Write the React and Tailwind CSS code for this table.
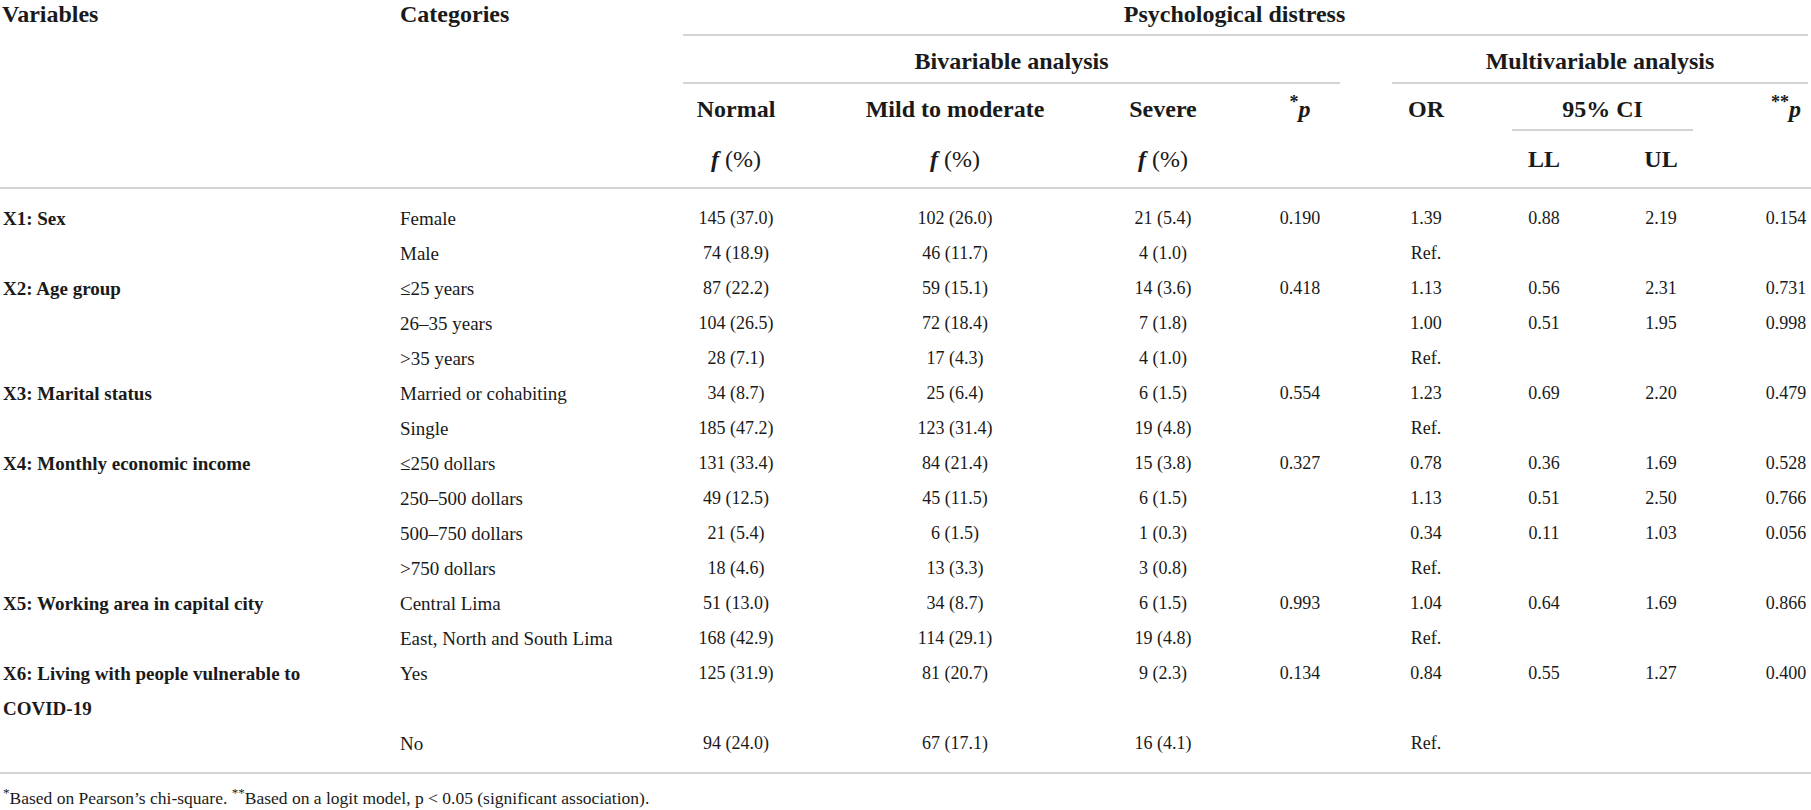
import React from 'react';

const rows = [
    { v: 'X1: Sex', c: 'Female', n: '145 (37.0)', m: '102 (26.0)', s: '21 (5.4)', p: '0.190', or: '1.39', ll: '0.88', ul: '2.19', pp: '0.154' },
    { c: 'Male', n: '74 (18.9)', m: '46 (11.7)', s: '4 (1.0)', or: 'Ref.' },
    { v: 'X2: Age group', c: '≤25 years', n: '87 (22.2)', m: '59 (15.1)', s: '14 (3.6)', p: '0.418', or: '1.13', ll: '0.56', ul: '2.31', pp: '0.731' },
    { c: '26–35 years', n: '104 (26.5)', m: '72 (18.4)', s: '7 (1.8)', or: '1.00', ll: '0.51', ul: '1.95', pp: '0.998' },
    { c: '>35 years', n: '28 (7.1)', m: '17 (4.3)', s: '4 (1.0)', or: 'Ref.' },
    { v: 'X3: Marital status', c: 'Married or cohabiting', n: '34 (8.7)', m: '25 (6.4)', s: '6 (1.5)', p: '0.554', or: '1.23', ll: '0.69', ul: '2.20', pp: '0.479' },
    { c: 'Single', n: '185 (47.2)', m: '123 (31.4)', s: '19 (4.8)', or: 'Ref.' },
    { v: 'X4: Monthly economic income', c: '≤250 dollars', n: '131 (33.4)', m: '84 (21.4)', s: '15 (3.8)', p: '0.327', or: '0.78', ll: '0.36', ul: '1.69', pp: '0.528' },
    { c: '250–500 dollars', n: '49 (12.5)', m: '45 (11.5)', s: '6 (1.5)', or: '1.13', ll: '0.51', ul: '2.50', pp: '0.766' },
    { c: '500–750 dollars', n: '21 (5.4)', m: '6 (1.5)', s: '1 (0.3)', or: '0.34', ll: '0.11', ul: '1.03', pp: '0.056' },
    { c: '>750 dollars', n: '18 (4.6)', m: '13 (3.3)', s: '3 (0.8)', or: 'Ref.' },
    { v: 'X5: Working area in capital city', c: 'Central Lima', n: '51 (13.0)', m: '34 (8.7)', s: '6 (1.5)', p: '0.993', or: '1.04', ll: '0.64', ul: '1.69', pp: '0.866' },
    { c: 'East, North and South Lima', n: '168 (42.9)', m: '114 (29.1)', s: '19 (4.8)', or: 'Ref.' },
    { v: 'X6: Living with people vulnerable to COVID-19', c: 'Yes', n: '125 (31.9)', m: '81 (20.7)', s: '9 (2.3)', p: '0.134', or: '0.84', ll: '0.55', ul: '1.27', pp: '0.400' },
    { c: 'No', n: '94 (24.0)', m: '67 (17.1)', s: '16 (4.1)', or: 'Ref.' },
];

const line = 'border-b-2 border-[#d4d4d4]';

const Num = ({ children }) => (
    <td className="text-center align-top whitespace-nowrap text-[18px] leading-[35px] p-0">{children}</td>
);

const Gap = () => <td className="p-0" />;

const App = () => {
    return (
        <div className="h-[810px] w-[1811px] overflow-hidden bg-white text-[#1a1a1a] font-['Liberation_Serif',serif]">
            <table className="table-fixed border-collapse w-[1811px]">
                <colgroup>
                    <col className="w-[395px]" />
                    <col className="w-[288px]" />
                    <col className="w-[106px]" />
                    <col className="w-[76px]" />
                    <col className="w-[180px]" />
                    <col className="w-[73px]" />
                    <col className="w-[90px]" />
                    <col className="w-[52px]" />
                    <col className="w-[80px]" />
                    <col className="w-[52px]" />
                    <col className="w-[68px]" />
                    <col className="w-[52px]" />
                    <col className="w-[64px]" />
                    <col className="w-[53px]" />
                    <col className="w-[64px]" />
                    <col className="w-[71px]" />
                    <col className="w-[44px]" />
                    <col className="w-[3px]" />
                </colgroup>
                <thead className="font-bold text-[24px] leading-[28px]">
                    <tr className="h-[35px]">
                        <th rowSpan={4} className={`text-left align-top p-0 pl-[2px] font-bold ${line}`}>Variables</th>
                        <th rowSpan={4} className={`text-left align-top p-0 pl-[5px] font-bold ${line}`}>Categories</th>
                        <th colSpan={15} className={`align-top p-0 pr-[22px] font-bold ${line}`}>Psychological distress</th>
                        <th rowSpan={4} className={`p-0 ${line}`} />
                    </tr>
                    <tr className="h-[48px]">
                        <th colSpan={7} className={`align-middle p-0 pt-[4px] font-bold ${line}`}>Bivariable analysis</th>
                        <th className="p-0" />
                        <th colSpan={7} className={`align-middle p-0 pt-[4px] font-bold ${line}`}>Multivariable analysis</th>
                    </tr>
                    <tr className="h-[47px]">
                        <th className="p-0 pt-[4px] font-bold whitespace-nowrap">Normal</th>
                        <th className="p-0" />
                        <th className="p-0 pt-[4px] font-bold whitespace-nowrap">Mild to moderate</th>
                        <th className="p-0" />
                        <th className="p-0 pt-[4px] font-bold whitespace-nowrap">Severe</th>
                        <th className="p-0" />
                        <th className="p-0 pt-[4px] font-bold whitespace-nowrap"><sup>*</sup><i>p</i></th>
                        <th className="p-0" />
                        <th className="p-0 pt-[4px] font-bold">OR</th>
                        <th className="p-0" />
                        <th colSpan={3} className={`p-0 pt-[4px] font-bold ${line}`}>95% CI</th>
                        <th className="p-0" />
                        <th className="p-0 pt-[4px] font-bold whitespace-nowrap"><sup>**</sup><i>p</i></th>
                    </tr>
                    <tr className="h-[58px]">
                        <th className={`p-0 font-bold whitespace-nowrap ${line}`}><i>f</i> <span className="font-normal">(%)</span></th>
                        <th className={`p-0 ${line}`} />
                        <th className={`p-0 font-bold whitespace-nowrap ${line}`}><i>f</i> <span className="font-normal">(%)</span></th>
                        <th className={`p-0 ${line}`} />
                        <th className={`p-0 font-bold whitespace-nowrap ${line}`}><i>f</i> <span className="font-normal">(%)</span></th>
                        <th className={`p-0 ${line}`} />
                        <th className={`p-0 ${line}`} />
                        <th className={`p-0 ${line}`} />
                        <th className={`p-0 ${line}`} />
                        <th className={`p-0 ${line}`} />
                        <th className={`p-0 font-bold ${line}`}>LL</th>
                        <th className={`p-0 ${line}`} />
                        <th className={`p-0 font-bold ${line}`}>UL</th>
                        <th className={`p-0 ${line}`} />
                        <th className={`p-0 ${line}`} />
                    </tr>
                </thead>
                <tbody>
                    <tr className="h-[13px]"><td colSpan={18} className="p-0" /></tr>
                    {rows.map((r, i) => (
                        <tr key={i}>
                            <td className="align-top p-0 pl-[3px] pr-[24px] font-bold text-[19px] leading-[35px]">{r.v}</td>
                            <td className="align-top p-0 pl-[5px] text-[19px] leading-[35px] whitespace-nowrap">{r.c}</td>
                            <Num>{r.n}</Num>
                            <Gap />
                            <Num>{r.m}</Num>
                            <Gap />
                            <Num>{r.s}</Num>
                            <Gap />
                            <Num>{r.p}</Num>
                            <Gap />
                            <Num>{r.or}</Num>
                            <Gap />
                            <Num>{r.ll}</Num>
                            <Gap />
                            <Num>{r.ul}</Num>
                            <Gap />
                            <Num>{r.pp}</Num>
                            <Gap />
                        </tr>
                    ))}
                    <tr className="h-[12px]"><td colSpan={18} className={`p-0 ${line}`} /></tr>
                </tbody>
            </table>
            <p className="mt-[12px] pl-[3px] text-[17.5px] leading-[24px]">
                <sup>*</sup>Based on Pearson’s chi-square. <sup>**</sup>Based on a logit model, p &lt; 0.05 (significant association).
            </p>
        </div>
    );
};

export default App;
